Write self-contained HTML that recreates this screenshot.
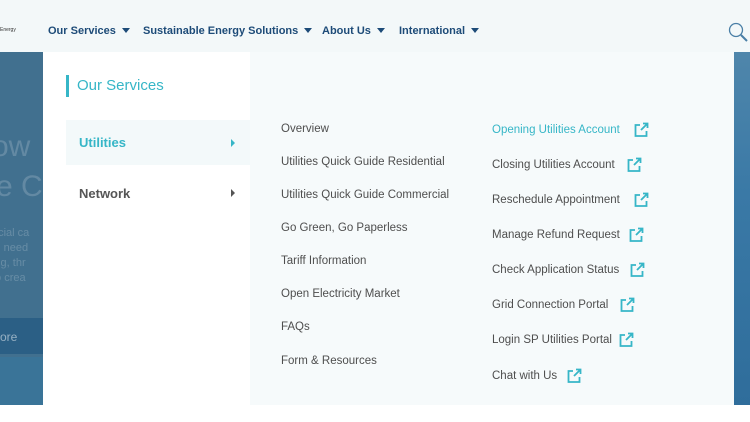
<!DOCTYPE html>
<html><head><style>
*{margin:0;padding:0;box-sizing:border-box}
body{width:750px;height:422px;background:#fff;font-family:"Liberation Sans",sans-serif;position:relative;overflow:hidden}
.hdr{position:absolute;left:0;top:0;width:750px;height:52px;background:#f3f8f9}
.nav{position:absolute;top:25px;font-size:11px;font-weight:bold;color:#1d4b78;white-space:nowrap}
.tri{display:inline-block;width:0;height:0;border-left:4px solid transparent;border-right:4px solid transparent;border-top:5px solid #1d4b78;margin-left:6px;vertical-align:1px}
.hero{position:absolute;left:0;top:52px;width:43px;height:353px;background:#41708f;overflow:hidden}
.rimg{position:absolute;left:734px;top:52px;width:16px;height:353px;background:linear-gradient(180deg,#4f86ab,#3a79a6 40%,#2f6d9b)}
.lcol{position:absolute;left:43px;top:52px;width:207px;height:353px;background:#fff}
.rcol{position:absolute;left:250px;top:52px;width:484px;height:353px;background:#f6fafb}
.t{position:absolute;font-size:11.5px;color:#4e4e4e;white-space:nowrap;line-height:14px}
.c{color:#36b6c7}
svg.i{position:absolute;width:16px;height:16px}
</style></head><body>
<div class="hdr">
<div style="position:absolute;left:0;top:27px;font-size:5px;color:#333">Energy</div>
<div class="nav" style="left:48px">Our Services<span class="tri"></span></div>
<div class="nav" style="left:143px">Sustainable Energy Solutions<span class="tri"></span></div>
<div class="nav" style="left:322px">About Us<span class="tri"></span></div>
<div class="nav" style="left:399px">International<span class="tri"></span></div>
<svg style="position:absolute;left:728px;top:22px" width="22" height="20" viewBox="0 0 22 20"><circle cx="8" cy="8" r="6.5" fill="none" stroke="#4a7fa6" stroke-width="1.3"/><path d="M13 13l6 6" stroke="#4a7fa6" stroke-width="2"/></svg>
</div>
<div class="hero">
<div style="position:absolute;left:-8px;top:78px;font-size:30px;color:rgba(255,255,255,.18)">ow</div>
<div style="position:absolute;left:-4px;top:118px;font-size:30px;color:rgba(255,255,255,.18)">e C</div>
<div style="position:absolute;left:-8px;top:174px;font-size:11px;line-height:15px;color:rgba(255,255,255,.2)">ocial ca<br>in need<br>ing, thr<br>to crea</div>
<div style="position:absolute;left:0;top:266px;width:43px;height:36px;background:#2b5f85;color:rgba(255,255,255,.5);font-size:12px;padding:12px 0 0 0">ore</div>
<div style="position:absolute;left:0;top:305px;width:43px;height:48px;background:#3a7498"></div>
</div>
<div class="rimg"></div>
<div class="lcol">
<div style="position:absolute;left:23px;top:23px;width:3px;height:22px;background:#36b6c7"></div>
<div style="position:absolute;left:34px;top:25px;font-size:15px;color:#36b6c7">Our Services</div>
<div style="position:absolute;left:23px;top:68px;width:184px;height:45px;background:#f3f9fa"></div>
<div style="position:absolute;left:36px;top:83px;font-size:13px;font-weight:bold;color:#36b6c7">Utilities</div>
<div style="position:absolute;left:188px;top:87px;width:0;height:0;border-top:4px solid transparent;border-bottom:4px solid transparent;border-left:4px solid #36b6c7"></div>
<div style="position:absolute;left:36px;top:134px;font-size:13px;font-weight:bold;color:#555">Network</div>
<div style="position:absolute;left:188px;top:137px;width:0;height:0;border-top:4px solid transparent;border-bottom:4px solid transparent;border-left:4px solid #555"></div>
</div>
<div class="rcol"></div>
<div class="t" style="left:281px;top:122px">Overview</div>
<div class="t" style="left:281px;top:155px">Utilities Quick Guide Residential</div>
<div class="t" style="left:281px;top:188px">Utilities Quick Guide Commercial</div>
<div class="t" style="left:281px;top:221px">Go Green, Go Paperless</div>
<div class="t" style="left:281px;top:254px">Tariff Information</div>
<div class="t" style="left:281px;top:287px">Open Electricity Market</div>
<div class="t" style="left:281px;top:320px">FAQs</div>
<div class="t" style="left:281px;top:354px">Form &amp; Resources</div>

<div class="t c" style="left:492px;top:123px">Opening Utilities Account</div>
<div class="t" style="left:492px;top:158px">Closing Utilities Account</div>
<div class="t" style="left:492px;top:193px">Reschedule Appointment</div>
<div class="t" style="left:492px;top:228px">Manage Refund Request</div>
<div class="t" style="left:492px;top:263px">Check Application Status</div>
<div class="t" style="left:492px;top:298px">Grid Connection Portal</div>
<div class="t" style="left:492px;top:333px">Login SP Utilities Portal</div>
<div class="t" style="left:492px;top:369px">Chat with Us</div>

<svg width="0" height="0" style="position:absolute"><defs><g id="ic" fill="none" stroke="#36b6c7" stroke-width="1.8"><path d="M7 3H2.5v11h11V9"/><path d="M8 8l6.5-6.5M10 1.5h4.5V6"/></g></defs></svg>
<svg class="i" style="left:633px;top:122px" viewBox="0 0 16 16"><use href="#ic"/></svg>
<svg class="i" style="left:626px;top:157px" viewBox="0 0 16 16"><use href="#ic"/></svg>
<svg class="i" style="left:633px;top:192px" viewBox="0 0 16 16"><use href="#ic"/></svg>
<svg class="i" style="left:628px;top:227px" viewBox="0 0 16 16"><use href="#ic"/></svg>
<svg class="i" style="left:629px;top:262px" viewBox="0 0 16 16"><use href="#ic"/></svg>
<svg class="i" style="left:619px;top:297px" viewBox="0 0 16 16"><use href="#ic"/></svg>
<svg class="i" style="left:618px;top:332px" viewBox="0 0 16 16"><use href="#ic"/></svg>
<svg class="i" style="left:566px;top:368px" viewBox="0 0 16 16"><use href="#ic"/></svg>
</body></html>
